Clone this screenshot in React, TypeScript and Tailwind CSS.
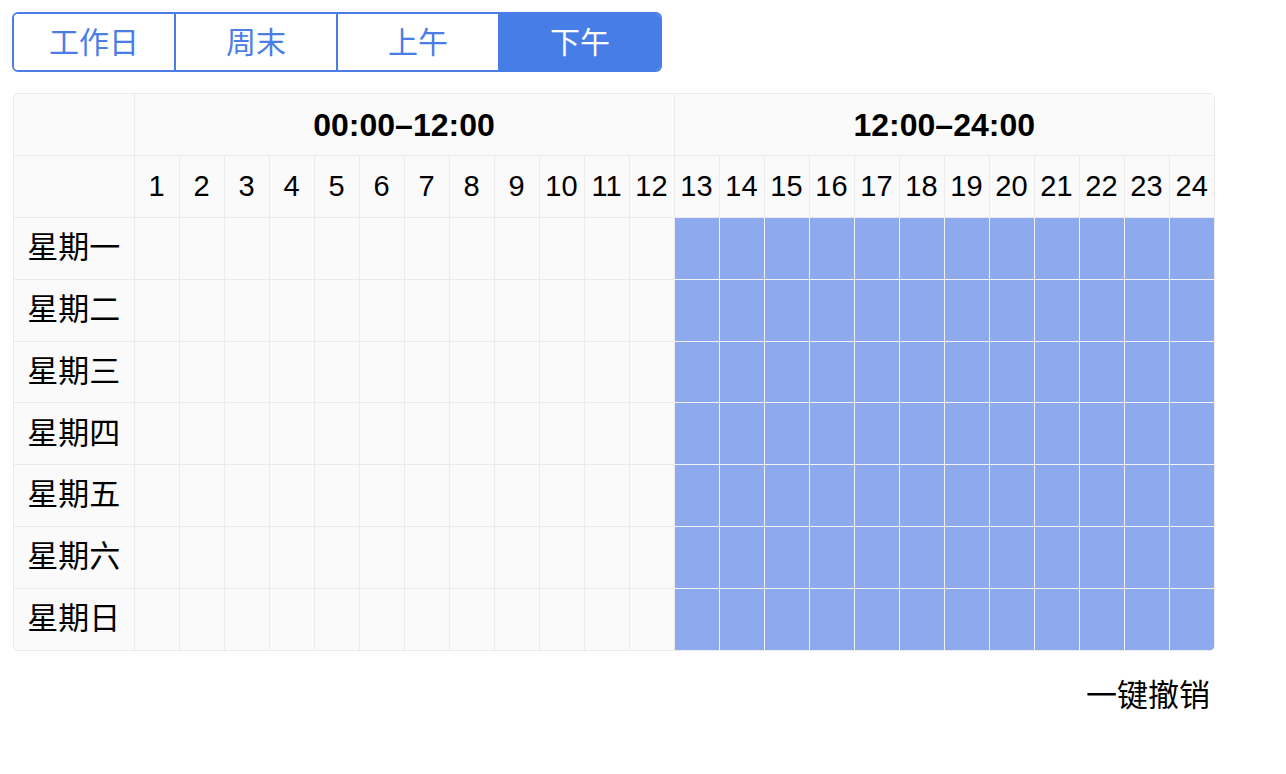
import React, { useState } from "react";

const days = ["星期一", "星期二", "星期三", "星期四", "星期五", "星期六", "星期日"];
const hours = Array.from({ length: 24 }, (_, i) => i + 1);
const tabs = ["工作日", "周末", "上午", "下午"];

export default function App() {
  const [active, setActive] = useState(3);
  const selected = (h: number) => {
    if (active === 3) return h > 12;
    if (active === 2) return h <= 12;
    return false;
  };
  return (
    <div
      className="p-[12px] text-black"
      style={{ fontFamily: '"Liberation Sans", "Noto Sans CJK SC", sans-serif' }}
    >
      <div className="inline-flex h-[60px] w-[650px] overflow-hidden rounded-[6px] border-2 border-[#4a7ee6]">
        {tabs.map((t, i) => (
          <button
            key={t}
            onClick={() => setActive(i)}
            className={
              "flex flex-1 items-center justify-center text-[30px] " +
              (i > 0 ? "border-l-2 border-[#4a7ee6] " : "") +
              (i === active ? "bg-[#477de6] text-white" : "bg-white text-[#4a7ee6]")
            }
          >
            {t}
          </button>
        ))}
      </div>

      <div className="ml-[1px] mt-[21px] w-[1202px] overflow-hidden rounded-[5px] border border-[#ebebeb]">
        <table className="w-[1200px] table-fixed border-collapse border-hidden bg-[#fafafa]">
          <colgroup>
            <col className="w-[120px]" />
            {hours.map((h) => (
              <col key={h} />
            ))}
          </colgroup>
          <thead>
            <tr className="h-[61.8px]">
              <th className="border border-[#ebebeb]"></th>
              <th colSpan={12} className="border border-[#ebebeb] text-[32px] font-bold">
                00:00–12:00
              </th>
              <th colSpan={12} className="border border-[#ebebeb] text-[32px] font-bold">
                12:00–24:00
              </th>
            </tr>
            <tr className="h-[61.8px]">
              <th className="border border-[#ebebeb]"></th>
              {hours.map((h) => (
                <th key={h} className="border border-[#ebebeb] p-0 text-[29px] font-normal">
                  {h}
                </th>
              ))}
            </tr>
          </thead>
          <tbody>
            {days.map((d) => (
              <tr key={d} className="h-[61.8px]">
                <td className="border border-[#ebebeb] p-0 text-center text-[31px]">{d}</td>
                {hours.map((h) => (
                  <td
                    key={h}
                    className={
                      selected(h)
                        ? "border border-[#f2f2f2] bg-[#8eaaee]"
                        : "border border-[#ebebeb]"
                    }
                  ></td>
                ))}
              </tr>
            ))}
          </tbody>
        </table>
      </div>

      <div className="mt-[22px] flex w-[1198px] justify-end">
        <button className="text-[31px]">一键撤销</button>
      </div>
    </div>
  );
}
